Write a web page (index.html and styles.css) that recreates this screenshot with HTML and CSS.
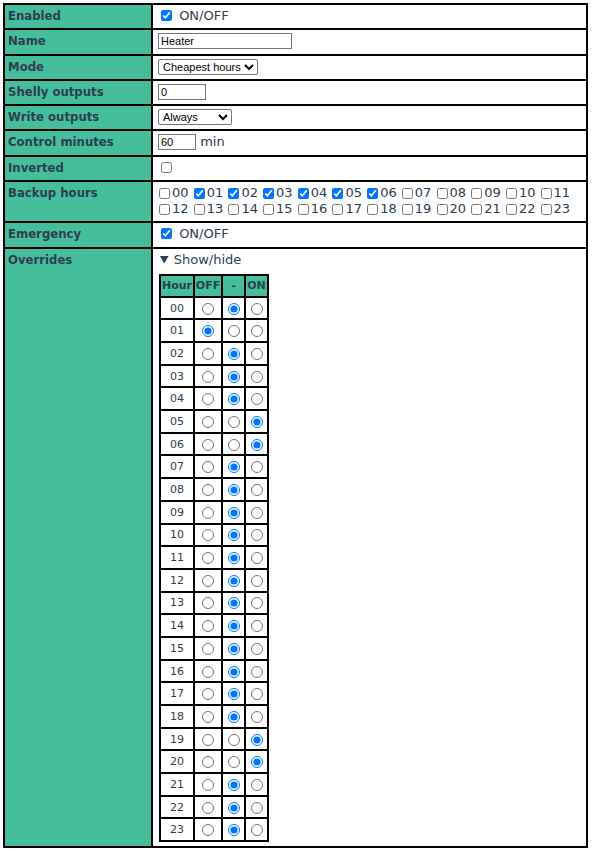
FILE: index.html
```html
<!DOCTYPE html>
<html>
<head>
<meta charset="utf-8">
<link rel="stylesheet" href="styles.css">
</head>
<body>
<table class="settings">
  <tr><td class="lbl">Enabled</td><td class="val"><label class="chk"><input type="checkbox" checked> ON/OFF</label></td></tr>
  <tr><td class="lbl">Name</td><td class="val"><input type="text" class="txt w-name" value="Heater"></td></tr>
  <tr><td class="lbl">Mode</td><td class="val"><select class="sel"><option>Cheapest hours</option></select></td></tr>
  <tr><td class="lbl">Shelly outputs</td><td class="val"><input type="text" class="txt w-shelly" value="0"></td></tr>
  <tr><td class="lbl">Write outputs</td><td class="val"><select class="sel w-write"><option>Always</option></select></td></tr>
  <tr><td class="lbl">Control minutes</td><td class="val"><input type="text" class="txt w-min" value="60"> <span class="unit">min</span></td></tr>
  <tr><td class="lbl">Inverted</td><td class="val"><label class="chk"><input type="checkbox"></label></td></tr>
  <tr><td class="lbl">Backup hours</td><td class="val"><div class="hours">
    <label class="hr"><input type="checkbox">00</label>
    <label class="hr"><input type="checkbox" checked>01</label>
    <label class="hr"><input type="checkbox" checked>02</label>
    <label class="hr"><input type="checkbox" checked>03</label>
    <label class="hr"><input type="checkbox" checked>04</label>
    <label class="hr"><input type="checkbox" checked>05</label>
    <label class="hr"><input type="checkbox" checked>06</label>
    <label class="hr"><input type="checkbox">07</label>
    <label class="hr"><input type="checkbox">08</label>
    <label class="hr"><input type="checkbox">09</label>
    <label class="hr"><input type="checkbox">10</label>
    <label class="hr"><input type="checkbox">11</label>
    <label class="hr"><input type="checkbox">12</label>
    <label class="hr"><input type="checkbox">13</label>
    <label class="hr"><input type="checkbox">14</label>
    <label class="hr"><input type="checkbox">15</label>
    <label class="hr"><input type="checkbox">16</label>
    <label class="hr"><input type="checkbox">17</label>
    <label class="hr"><input type="checkbox">18</label>
    <label class="hr"><input type="checkbox">19</label>
    <label class="hr"><input type="checkbox">20</label>
    <label class="hr"><input type="checkbox">21</label>
    <label class="hr"><input type="checkbox">22</label>
    <label class="hr"><input type="checkbox">23</label>
  </div></td></tr>
  <tr><td class="lbl">Emergency</td><td class="val"><label class="chk"><input type="checkbox" checked> ON/OFF</label></td></tr>
  <tr><td class="lbl">Overrides</td><td class="val">
    <details open>
      <summary>Show/hide</summary>
      <table class="ov">
        <tr><th class="c-hour">Hour</th><th class="c-off">OFF</th><th class="c-mid">-</th><th class="c-on">ON</th></tr>
        <tr><td>00</td><td><input type="radio" name="h00"></td><td><input type="radio" name="h00" checked></td><td><input type="radio" name="h00"></td></tr>
        <tr><td>01</td><td><input type="radio" name="h01" checked></td><td><input type="radio" name="h01"></td><td><input type="radio" name="h01"></td></tr>
        <tr><td>02</td><td><input type="radio" name="h02"></td><td><input type="radio" name="h02" checked></td><td><input type="radio" name="h02"></td></tr>
        <tr><td>03</td><td><input type="radio" name="h03"></td><td><input type="radio" name="h03" checked></td><td><input type="radio" name="h03"></td></tr>
        <tr><td>04</td><td><input type="radio" name="h04"></td><td><input type="radio" name="h04" checked></td><td><input type="radio" name="h04"></td></tr>
        <tr><td>05</td><td><input type="radio" name="h05"></td><td><input type="radio" name="h05"></td><td><input type="radio" name="h05" checked></td></tr>
        <tr><td>06</td><td><input type="radio" name="h06"></td><td><input type="radio" name="h06"></td><td><input type="radio" name="h06" checked></td></tr>
        <tr><td>07</td><td><input type="radio" name="h07"></td><td><input type="radio" name="h07" checked></td><td><input type="radio" name="h07"></td></tr>
        <tr><td>08</td><td><input type="radio" name="h08"></td><td><input type="radio" name="h08" checked></td><td><input type="radio" name="h08"></td></tr>
        <tr><td>09</td><td><input type="radio" name="h09"></td><td><input type="radio" name="h09" checked></td><td><input type="radio" name="h09"></td></tr>
        <tr><td>10</td><td><input type="radio" name="h10"></td><td><input type="radio" name="h10" checked></td><td><input type="radio" name="h10"></td></tr>
        <tr><td>11</td><td><input type="radio" name="h11"></td><td><input type="radio" name="h11" checked></td><td><input type="radio" name="h11"></td></tr>
        <tr><td>12</td><td><input type="radio" name="h12"></td><td><input type="radio" name="h12" checked></td><td><input type="radio" name="h12"></td></tr>
        <tr><td>13</td><td><input type="radio" name="h13"></td><td><input type="radio" name="h13" checked></td><td><input type="radio" name="h13"></td></tr>
        <tr><td>14</td><td><input type="radio" name="h14"></td><td><input type="radio" name="h14" checked></td><td><input type="radio" name="h14"></td></tr>
        <tr><td>15</td><td><input type="radio" name="h15"></td><td><input type="radio" name="h15" checked></td><td><input type="radio" name="h15"></td></tr>
        <tr><td>16</td><td><input type="radio" name="h16"></td><td><input type="radio" name="h16" checked></td><td><input type="radio" name="h16"></td></tr>
        <tr><td>17</td><td><input type="radio" name="h17"></td><td><input type="radio" name="h17" checked></td><td><input type="radio" name="h17"></td></tr>
        <tr><td>18</td><td><input type="radio" name="h18"></td><td><input type="radio" name="h18" checked></td><td><input type="radio" name="h18"></td></tr>
        <tr><td>19</td><td><input type="radio" name="h19"></td><td><input type="radio" name="h19"></td><td><input type="radio" name="h19" checked></td></tr>
        <tr><td>20</td><td><input type="radio" name="h20"></td><td><input type="radio" name="h20"></td><td><input type="radio" name="h20" checked></td></tr>
        <tr><td>21</td><td><input type="radio" name="h21"></td><td><input type="radio" name="h21" checked></td><td><input type="radio" name="h21"></td></tr>
        <tr><td>22</td><td><input type="radio" name="h22"></td><td><input type="radio" name="h22" checked></td><td><input type="radio" name="h22"></td></tr>
        <tr><td>23</td><td><input type="radio" name="h23"></td><td><input type="radio" name="h23" checked></td><td><input type="radio" name="h23"></td></tr>
      </table>
    </details>
  </td></tr>
</table>
</body>
</html>
```

FILE: styles.css
```css
html, body {
  background: #ffffff;
}
body {
  margin: 3px;
  font-family: "DejaVu Sans", Verdana, sans-serif;
  font-size: 13px;
  color: #2c3e50;
}
.settings {
  border-collapse: collapse;
  width: 585px;
}
.settings > tbody > tr > td {
  border: 2px solid #000;
  padding: 3px 4px 4.3px 4px;
  line-height: 16px;
  vertical-align: top;
}
.settings > tbody > tr > td.lbl {
  width: 139px;
  padding-left: 3px;
  background: #46be9c;
  font-family: "DejaVu Sans Condensed", "DejaVu Sans", sans-serif;
  font-stretch: condensed;
  font-weight: bold;
}
.chk input {
  width: 11px;
  height: 11px;
  margin: 0 3px 0 4px;
  vertical-align: -1px;
}
.txt, .sel {
  font-family: "Liberation Sans", Arial, sans-serif;
  font-size: 11px;
  color: #000;
  height: 16px;
  box-sizing: border-box;
  border: 1px solid #767676;
  padding: 0 2px;
  margin: 0 0 0 1px;
  vertical-align: top;
}
.sel {
  border-radius: 2px;
  background: #fff;
  padding: 0;
}
.w-name { width: 134px; }
.w-shelly { width: 48px; }
.w-write { width: 74px; }
.w-min { width: 38px; }
.hours {
  display: flex;
  flex-wrap: wrap;
  line-height: 16px;
}
.hr {
  display: inline-flex;
  align-items: center;
  width: 34.7px;
}
.hr input {
  width: 11px;
  height: 11px;
  margin: 0 2px 0 2px;
}
details summary {
  display: list-item;
  cursor: pointer;
  margin-left: 3px;
}
.ov {
  border-collapse: collapse;
  margin: 6px 0 0 2px;
  font-size: 11px;
  line-height: 13px;
}
.ov th, .ov td {
  border: 2px solid #000;
  text-align: center;
  vertical-align: middle;
  padding: 0;
}
.ov th {
  background: #46be9c;
  font-weight: bold;
  height: 20px;
}
.ov td {
  height: 20.7px;
}
.ov .c-hour { width: 32px; }
.ov .c-off { width: 26px; }
.ov .c-mid, .ov .c-on { width: 21px; }
.ov input {
  width: 12px;
  height: 12px;
  margin: 0;
  vertical-align: middle;
}
```
